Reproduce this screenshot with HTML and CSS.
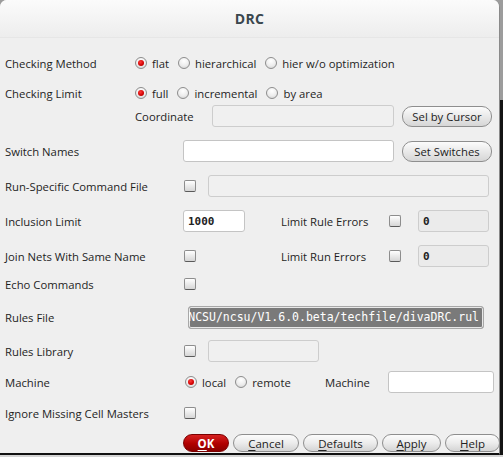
FILE: index.html
```html
<!DOCTYPE html>
<html>
<head>
<meta charset="utf-8">
<link rel="stylesheet" href="styles.css">
</head>
<body>
<div class="dialog">
  <div class="titlebar">DRC</div>
  <div class="content">
    <div class="row r1">
      <span class="label w130">Checking Method</span>
      <span class="radio checked"></span><span class="opt">flat</span>
      <span class="radio"></span><span class="opt">hierarchical</span>
      <span class="radio"></span><span class="opt">hier w/o optimization</span>
    </div>
    <div class="row r2">
      <span class="label w130">Checking Limit</span>
      <span class="radio checked"></span><span class="opt">full</span>
      <span class="radio"></span><span class="opt">incremental</span>
      <span class="radio"></span><span class="opt">by area</span>
    </div>
    <div class="row r3">
      <span class="spacer w130"></span>
      <span class="label w77">Coordinate</span>
      <span class="field disabled coord"></span>
      <span class="btn selbtn">Sel by Cursor</span>
    </div>
    <div class="row r4">
      <span class="label w178">Switch Names</span>
      <span class="field switches"></span>
      <span class="btn selbtn">Set Switches</span>
    </div>
    <div class="row r5">
      <span class="label w179">Run-Specific Command File</span>
      <span class="check"></span>
      <span class="field disabled cmdfile"></span>
    </div>
    <div class="row r6">
      <span class="label w178">Inclusion Limit</span>
      <span class="field incl mono">1000</span>
      <span class="label sublabel gap36">Limit Rule Errors</span>
      <span class="check"></span>
      <span class="field disabled limit mono">0</span>
    </div>
    <div class="row r7">
      <span class="label w179">Join Nets With Same Name</span>
      <span class="check"></span>
      <span class="label sublabel gap85">Limit Run Errors</span>
      <span class="check"></span>
      <span class="field disabled limit mono">0</span>
    </div>
    <div class="row r8">
      <span class="label w179">Echo Commands</span>
      <span class="check"></span>
    </div>
    <div class="row r9">
      <span class="label w183">Rules File</span>
      <span class="field rules"><span class="rules-text">NCSU/ncsu/V1.6.0.beta/techfile/divaDRC.rul</span></span>
    </div>
    <div class="row r10">
      <span class="label w179">Rules Library</span>
      <span class="check"></span>
      <span class="field disabled rulelib"></span>
    </div>
    <div class="row r11">
      <span class="label w180">Machine</span>
      <span class="radio-group">
        <span class="radio checked"></span><span class="opt local">local</span>
        <span class="radio"></span><span class="opt">remote</span>
      </span>
      <span class="label machine2">Machine</span>
      <span class="field machine"></span>
    </div>
    <div class="row r12">
      <span class="label w179">Ignore Missing Cell Masters</span>
      <span class="check"></span>
    </div>
    <div class="row r13">
      <span class="pbtn ok"><u>O</u>K</span>
      <span class="pbtn cancel"><u>C</u>ancel</span>
      <span class="pbtn defaults"><u>D</u>efaults</span>
      <span class="pbtn apply"><u>A</u>pply</span>
      <span class="pbtn help"><u>H</u>elp</span>
    </div>
  </div>
</div>
</body>
</html>
```

FILE: styles.css
```css
* { box-sizing: border-box; }
html, body { margin: 0; padding: 0; }
body {
  width: 503px;
  height: 457px;
  overflow: hidden;
  background:
    linear-gradient(to bottom, transparent 0, transparent 455px, #d4d4d4 455px),
    linear-gradient(to bottom, #9c9c9c 0, #9c9c9c 100px, #141414 100px);
  font-family: "Open Sans", "Noto Sans", sans-serif;
  font-size: 11.3px;
  color: #1e1e1e;
}
.dialog {
  width: 500px;
  height: 455px;
  background: #efefef;
  border-right: 1px solid #8a8a8a;
  border-bottom: 2px solid #111;
  border-radius: 7px 7px 0 0;
  overflow: hidden;
}
.titlebar {
  height: 38px;
  background: linear-gradient(to bottom, #fbfbfb, #ededed);
  border-bottom: 1px solid #e6e6e6;
  text-align: center;
  font-weight: bold;
  font-size: 14px;
  line-height: 38px;
  color: #3a474e;
  letter-spacing: 0.3px;
}
.content {
  padding: 14px 0 0 5px;
}
.row {
  display: flex;
  align-items: center;
  height: 22px;
  margin-top: 13px;
  white-space: nowrap;
}
.row.r1 { margin-top: 0; }
.row.r2 { margin-top: 8px; }
.row.r3 { margin-top: 1px; }
.row.r8 { margin-top: 6px; }
.row.r9 { margin-top: 11px; }
.row.r10 { margin-top: 12px; }
.row.r11 { margin-top: 9px; }
.row.r12 { margin-top: 9px; }
.row.r13 { margin-top: 10px; height: 18px; padding-left: 178px; }

.label { display: inline-block; }
.spacer { display: inline-block; }
.w130 { width: 130px; }
.w77 { width: 77px; }
.w178 { width: 178px; }
.w179 { width: 179px; }
.w180 { width: 180px; }
.w183 { width: 183px; }
.sublabel { width: 108px; }
.gap36 { margin-left: 36px; }
.gap85 { margin-left: 85px; }

.radio-group {
  display: inline-flex;
  align-items: center;
  width: 140px;
}
.radio {
  display: inline-block;
  width: 12px;
  height: 12px;
  border-radius: 50%;
  border: 1px solid #8d8d8d;
  background: radial-gradient(circle at 50% 30%, #ffffff 0, #ededed 55%, #cfcfcf 100%);
  margin-right: 5px;
  position: relative;
  flex: none;
}
.radio.checked::after {
  content: "";
  position: absolute;
  left: 2px;
  top: 2px;
  width: 6px;
  height: 6px;
  border-radius: 50%;
  background: radial-gradient(circle at 40% 35%, #ff3a3a 0, #d00000 60%, #a00000 100%);
}
.opt { margin-right: 9px; }
.opt.local { margin-right: 9px; }

.check {
  display: inline-block;
  width: 12px;
  height: 12px;
  border: 1px solid #8d8d8d;
  border-bottom-color: #5a5a5a;
  border-radius: 2px;
  background: linear-gradient(to bottom, #ffffff, #e6e6e6 60%, #d6d6d6);
  flex: none;
}

.field {
  display: inline-flex;
  align-items: center;
  height: 22px;
  background: #fff;
  border: 1px solid #c4c4c4;
  border-radius: 3px;
  flex: none;
}
.field.disabled {
  background: #f0f0f0;
  border-color: #cdcdcd;
}
.mono {
  font-family: "DejaVu Sans Mono", monospace;
  font-weight: bold;
  font-size: 11px;
  color: #222;
}
.coord { width: 182px; }
.switches { width: 211px; }
.cmdfile { width: 281px; margin-left: 12px; }
.incl { width: 62px; padding-left: 4px; }
.limit { width: 71px; margin-left: 17px; padding-left: 4px; height: 22px; }
.r6 .limit, .r7 .limit { background: #ebebeb; }
.rules {
  width: 296px;
  height: 23px;
  border: 1px solid #a8a8a8;
  background: #7a7a7a;
  color: #fff;
  font-family: "DejaVu Sans Mono", monospace;
  font-size: 11.5px;
  justify-content: flex-end;
  overflow: hidden;
  padding-right: 4px;
  box-shadow: inset 0 0 0 1px #e8e8e8;
}
.rules-text { white-space: nowrap; }
.rulelib { width: 111px; margin-left: 12px; }
.machine2 { width: 63px; }
.machine { width: 106px; }

.btn {
  display: inline-flex;
  align-items: center;
  justify-content: center;
  width: 90px;
  height: 21px;
  margin-left: 8px;
  border: 1px solid #8e8e8e;
  border-radius: 10px;
  background: linear-gradient(to bottom, #fcfcfc, #e9e9e9 50%, #d6d6d6);
  color: #222;
}
.pbtn {
  display: inline-flex;
  align-items: center;
  justify-content: center;
  height: 18px;
  margin-right: 4px;
  border: 1px solid #8e8e8e;
  border-radius: 9px;
  background: linear-gradient(to bottom, #fcfcfc, #ececec 50%, #d4d4d4);
  font-size: 11.5px;
  color: #222;
  flex: none;
}
.pbtn u { text-decoration-thickness: 1px; text-underline-offset: 2px; }
.ok {
  width: 46px;
  background: linear-gradient(to bottom, #d62020, #b00000 55%, #8a0000);
  border-color: #7a0000;
  color: #fff;
  font-weight: bold;
}
.cancel { width: 66px; }
.defaults { width: 75px; }
.apply { width: 59px; }
.help { width: 55px; }
```
